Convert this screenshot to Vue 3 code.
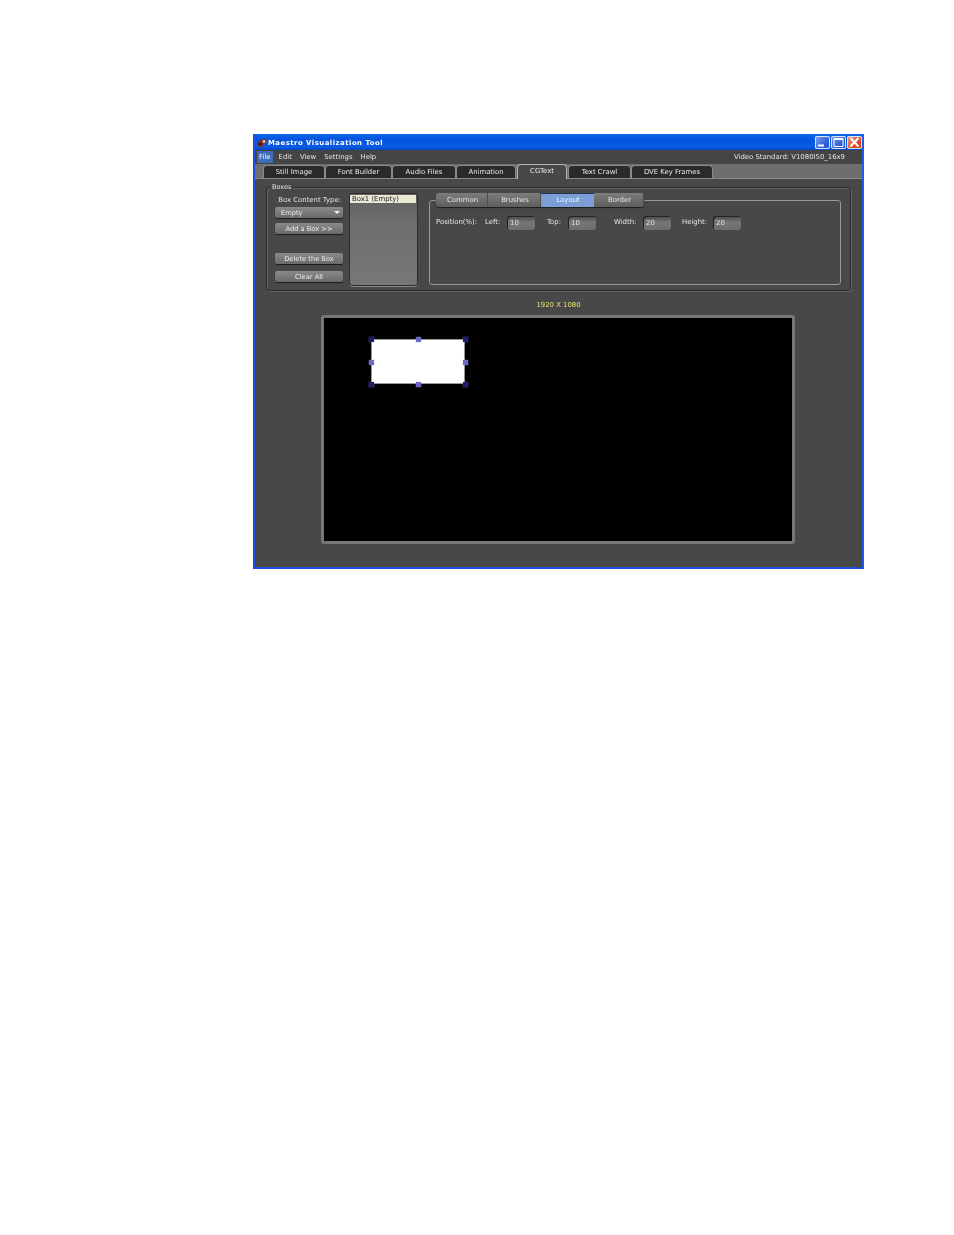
<script setup>
const menus = ["File", "Edit", "View", "Settings", "Help"];

const tabs = [
  { name: "Still Image", width: 62 },
  { name: "Font Builder", width: 67 },
  { name: "Audio Files", width: 64 },
  { name: "Animation", width: 60 },
  { name: "CGText", width: 50, active: true },
  { name: "Text Crawl", width: 63 },
  { name: "DVE Key Frames", width: 82 },
];

const subtabs = [
  { name: "Common", width: 52 },
  { name: "Brushes", width: 53 },
  { name: "Layout", width: 53, active: true },
  { name: "Border", width: 50 },
];

const fields = [
  { label: "Left:", value: "10", gap: 49, width: 22 },
  { label: "Top:", value: "10", gap: 12, width: 21 },
  { label: "Width:", value: "20", gap: 18, width: 29 },
  { label: "Height:", value: "20", gap: 11, width: 31 },
];

const handles = [
  { x: 0, y: 0 },
  { x: 50, y: 0, mid: true },
  { x: 100, y: 0 },
  { x: 0, y: 50, mid: true },
  { x: 100, y: 50, mid: true },
  { x: 0, y: 100 },
  { x: 50, y: 100, mid: true },
  { x: 100, y: 100 },
];
</script>

<template>
  <div class="window">
    <div class="titlebar">
      <svg class="appicon" width="12" height="10" viewBox="0 0 12 10">
        <path d="M1 6 L4 2 L8 1 L11 3 L9 6 L5 9 L2 9 Z" fill="#8a2a22" />
        <circle cx="4" cy="6" r="1.6" fill="#222" />
        <circle cx="8" cy="3.5" r="1.4" fill="#d8c9b0" />
      </svg>
      <span class="apptitle">Maestro Visualization Tool</span>
      <div class="winbtns">
        <div class="winbtn">
          <svg width="15" height="13" viewBox="0 0 15 13">
            <rect x="3" y="8.5" width="6" height="2" fill="#fff" />
          </svg>
        </div>
        <div class="winbtn">
          <svg width="15" height="13" viewBox="0 0 15 13">
            <path d="M3 2.5 H12 V10.5 H3 Z" fill="none" stroke="#fff" />
            <rect x="3" y="2" width="9" height="2" fill="#fff" />
          </svg>
        </div>
        <div class="winbtn close">
          <svg width="15" height="13" viewBox="0 0 15 13">
            <path d="M3.5 2 L11.5 10.5 M11.5 2 L3.5 10.5" stroke="#fff" stroke-width="2" />
          </svg>
        </div>
      </div>
    </div>

    <div class="menubar">
      <span v-for="m in menus" :key="m" class="menuitem" :class="{ on: m === 'File' }">{{ m }}</span>
      <span class="standard">Video Standard: V1080I50_16x9</span>
    </div>

    <div class="tabstrip">
      <div
        v-for="t in tabs"
        :key="t.name"
        class="tab"
        :class="{ active: t.active }"
        :style="{ width: t.width + 'px' }"
      >
        {{ t.name }}
      </div>
    </div>

    <div class="content">
      <div class="group">
        <span class="legend">Boxes</span>
        <div class="leftcol">
          <div class="typelabel">Box Content Type:</div>
          <div class="btn dropdown">
            <span>Empty</span>
            <span class="caret"></span>
          </div>
          <div class="btn addbtn">Add a Box &gt;&gt;</div>
          <div class="btn delbtn">Delete the Box</div>
          <div class="btn clearbtn">Clear All</div>
        </div>

        <div class="boxlist">
          <div class="boxrow">Box1 (Empty)</div>
        </div>

        <div class="rightcol">
          <div class="subtabs">
            <div
              v-for="s in subtabs"
              :key="s.name"
              class="subtab"
              :class="{ active: s.active }"
              :style="{ width: s.width + 'px' }"
            >
              {{ s.name }}
            </div>
          </div>
          <div class="panel">
            <div class="fields">
              <span class="poslabel">Position(%):</span>
              <div
                v-for="f in fields"
                :key="f.label"
                class="field"
                :style="{ marginLeft: f.gap + 'px' }"
              >
                <span :style="{ width: f.width + 'px' }">{{ f.label }}</span>
                <div class="input">{{ f.value }}</div>
              </div>
            </div>
          </div>
        </div>
      </div>

      <div class="resolution">1920 X 1080</div>

      <div class="canvas">
        <div class="whitebox">
          <span
            v-for="(h, i) in handles"
            :key="i"
            class="handle"
            :class="{ mid: h.mid }"
            :style="{ left: h.x + '%', top: h.y + '%' }"
          ></span>
        </div>
      </div>
    </div>
  </div>
</template>

<style>
body {
  background: #fff;
}
</style>

<style scoped>
.window {
  width: 611px;
  height: 435px;
  margin: 134px 0 0 253px;
  box-sizing: border-box;
  border-left: 2px solid #1c4fd6;
  border-right: 2px solid #1f5ae8;
  border-bottom: 2px solid #1c4fd6;
  background: #484848;
  display: flex;
  flex-direction: column;
  font-family: "DejaVu Sans", sans-serif;
  font-size: 6.9px;
  color: #e4e4e4;
  overflow: hidden;
  filter: blur(0.3px);
}
.titlebar {
  height: 16px;
  flex: none;
  margin: 0 -2px;
  box-sizing: border-box;
  display: flex;
  align-items: center;
  padding: 2px 2px 0 3px;
  background: linear-gradient(#0b66ee, #0654dc 35%, #0a5be6 80%, #0647c0);
}
.appicon {
  flex: none;
}
.apptitle {
  color: #fff;
  font-size: 6.9px;
  font-weight: bold;
  letter-spacing: 0.5px;
}
.winbtns {
  margin-left: auto;
  display: flex;
  gap: 1px;
  margin-top: -1px;
}
.winbtn {
  width: 15px;
  height: 13px;
  box-sizing: border-box;
  border-radius: 2px;
  background: linear-gradient(135deg, #7fa2ee, #2a5ad6 70%);
  box-shadow: inset 0 0 0 1px #d8e4fb;
  display: flex;
}
.winbtn.close {
  background: linear-gradient(135deg, #f0a080, #d8431c 70%);
}
.menubar {
  height: 14px;
  flex: none;
  display: flex;
  align-items: center;
  padding-left: 2px;
  background: #444;
}
.menuitem {
  height: 12px;
  line-height: 12px;
  padding: 0 2px;
  margin-right: 4px;
}
.menuitem.on {
  background: #3f6cb8;
  color: #fff;
}
.standard {
  margin-left: auto;
  margin-right: 17px;
}
.tabstrip {
  height: 15px;
  flex: none;
  display: flex;
  padding-left: 8px;
  background: #6e6e6e;
  box-shadow: inset 0 -1px 0 #8a8a8a;
}
.tab {
  height: 13px;
  margin-top: 1px;
  box-sizing: border-box;
  text-align: center;
  line-height: 12px;
  background: #2a2a2a;
  border: 1px solid #8a8a8a;
  border-bottom: none;
  border-radius: 4px 4px 0 0;
  color: #e8e8e8;
}
.tab.active {
  height: 15px;
  margin-top: 0;
  margin-left: 1px;
  margin-right: 1px;
  background: #484848;
  border-color: #b4b4b4;
}
.content {
  flex: 1;
  min-height: 0;
  display: flex;
  flex-direction: column;
}
.group {
  position: relative;
  width: 585px;
  height: 104px;
  flex: none;
  margin: 8px 0 0 11px;
  padding: 5px 0 0 8px;
  box-sizing: border-box;
  display: flex;
  border: 1px solid #2c2c2c;
  box-shadow: 1px 1px 0 #636363, inset 1px 1px 0 #636363;
  border-radius: 3px;
}
.legend {
  position: absolute;
  left: 3px;
  top: -5px;
  padding: 0 2px;
  background: #484848;
  font-size: 6.5px;
  line-height: 9px;
}
.leftcol {
  width: 68px;
  flex: none;
}
.typelabel {
  height: 14px;
  line-height: 15px;
  text-align: right;
  margin-right: 2px;
  white-space: nowrap;
}
.btn {
  height: 11px;
  box-sizing: border-box;
  border-radius: 2px;
  background: linear-gradient(#8a8a8a, #6a6a6a);
  box-shadow: 0 1px 1px #1c1c1c;
  text-align: center;
  line-height: 12px;
  font-size: 6.7px;
  color: #eee;
}
.dropdown {
  display: flex;
  justify-content: space-between;
  align-items: center;
  padding: 0 3px 0 6px;
}
.caret {
  width: 0;
  height: 0;
  border-left: 3px solid transparent;
  border-right: 3px solid transparent;
  border-top: 3px solid #f4f4f4;
}
.addbtn {
  margin-top: 5px;
  line-height: 13px;
}
.delbtn {
  margin-top: 19px;
}
.clearbtn {
  margin-top: 7px;
}
.boxlist {
  width: 69px;
  height: 93px;
  flex: none;
  margin-left: 6px;
  padding: 2px 2px 0 1px;
  box-sizing: border-box;
  border-radius: 4px;
  background: linear-gradient(#5f5f5f, #6e6e6e 30%, #777);
  box-shadow: inset 0 0 0 1px #2c2c2c, 0 1px 0 #888;
}
.boxrow {
  height: 8px;
  line-height: 9px;
  padding-left: 2px;
  background: #ece8d6;
  color: #222;
  white-space: nowrap;
}
.rightcol {
  width: 412px;
  flex: none;
  margin-left: 11px;
}
.subtabs {
  position: relative;
  z-index: 1;
  height: 14px;
  margin: 0 0 -7px 7px;
  display: flex;
  border-radius: 3px;
  box-shadow: 0 1px 1px #1c1c1c;
  width: 208px;
  overflow: hidden;
}
.subtab {
  text-align: center;
  line-height: 15px;
  padding-left: 1px;
  box-sizing: border-box;
  background: linear-gradient(#7c7c7c, #5e5e5e);
  box-shadow: inset -1px 0 0 #4c4c4c;
}
.subtab.active {
  background: #7c9ed6;
  color: #f4f6fa;
  box-shadow: inset 0 1px 0 #24344e;
}
.panel {
  height: 85px;
  box-sizing: border-box;
  border: 1px solid #8e9c96;
  border-radius: 3px;
  padding: 15px 0 0 6px;
}
.fields {
  display: flex;
  align-items: center;
  height: 14px;
  line-height: 10px;
  margin-top: -1px;
}
.poslabel {
  width: 0;
  white-space: nowrap;
}
.field {
  display: flex;
  align-items: center;
}
.input {
  width: 28px;
  height: 14px;
  margin-top: 2px;
  padding-left: 3px;
  box-sizing: border-box;
  border-radius: 3px;
  background: linear-gradient(#4a4a4a, #767676 45%, #6e6e6e);
  box-shadow: inset 1px 1px 0 #222;
  line-height: 15px;
}
.resolution {
  height: 11px;
  margin-top: 8px;
  text-align: center;
  line-height: 12px;
  color: #e2e26a;
}
.canvas {
  position: relative;
  width: 474px;
  height: 229px;
  flex: none;
  margin: 5px 0 0 66px;
  box-sizing: border-box;
  border: 3px solid #777;
  border-radius: 3px;
  background: #000;
}
.whitebox {
  position: absolute;
  left: 47px;
  top: 21px;
  width: 94px;
  height: 45px;
  background: #fff;
  box-shadow: inset 0 0 0 1px #999;
}
.handle {
  position: absolute;
  width: 5px;
  height: 5px;
  margin: -2px 0 0 -2.5px;
  background: #1c1c70;
  box-shadow: 0 0 1px #8f8fe0;
}
.handle.mid {
  background: #6a6ac4;
}
</style>
